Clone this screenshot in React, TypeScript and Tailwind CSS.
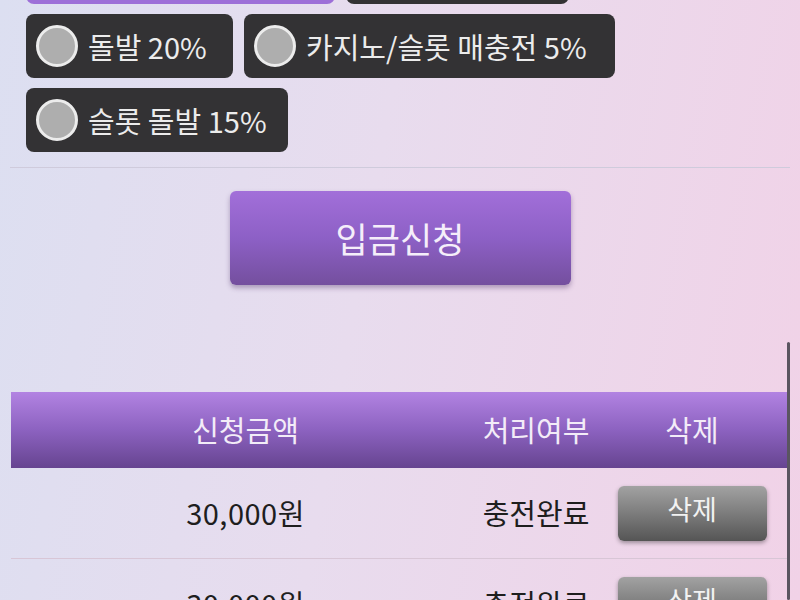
const options = [
  { label: '돌발 20%', width: 'w-[207px]' },
  { label: '카지노/슬롯 매충전 5%', width: 'w-[371px]' },
  { label: '슬롯 돌발 15%', width: 'w-[262px]' },
];

const rows = [
  { amount: '30,000원', status: '충전완료' },
  { amount: '30,000원', status: '충전완료' },
];

const App = () => {
  return (
    <div className="relative w-[800px] h-[600px] overflow-hidden bg-[linear-gradient(100deg,#dcdff1_0%,#e8dcee_45%,#f1d2e7_100%)] font-['Noto_Sans_CJK_KR','Noto_Sans',sans-serif]">
      <div className="flex flex-col -mt-[60px]">
        <div className="flex flex-wrap gap-x-[11px] gap-y-[10px] pl-[26px] pr-[170px]">
          <div className="h-[64px] w-[309px] rounded-[8px] bg-[#9d6fd8]" />
          <div className="h-[64px] w-[223px] rounded-[8px] bg-[#333234]" />
          {options.map((o) => (
            <label
              key={o.label}
              className={`${o.width} h-[64px] rounded-[8px] bg-[#333234] flex items-center gap-[10px] pl-[10px]`}
            >
              <span className="size-[42px] shrink-0 rounded-full bg-[#aeaeae] border-[3px] border-[#ececec]" />
              <span className="text-[29px] leading-none text-[#ececec] whitespace-nowrap">{o.label}</span>
            </label>
          ))}
        </div>

        <div className="mt-[15px] mx-[10px] h-px bg-[#cfcbdc]" />

        <div className="flex justify-center mt-[23px]">
          <button className="w-[341px] h-[94px] rounded-[6px] bg-[linear-gradient(180deg,#a26fd9_0%,#8d60c6_50%,#744f9e_100%)] shadow-[0_3px_5px_rgba(60,30,90,0.35)] text-[35px] text-[#f5eefa]">
            입금신청
          </button>
        </div>

        <div className="mt-[107px] ml-[11px] w-[776px]">
          <div className="grid grid-cols-[469px_112px_195px] h-[76px] items-center bg-[linear-gradient(180deg,#b283e2_0%,#8c62c0_50%,#664490_100%)] text-[29px] text-[#f3ecf8] whitespace-nowrap">
            <span className="text-center">신청금액</span>
            <span className="text-center">처리여부</span>
            <span className="text-center pl-[5px]">삭제</span>
          </div>
          {rows.map((r, i) => (
            <div
              key={i}
              className="grid grid-cols-[469px_112px_195px] h-[91px] items-center border-b border-[#d8c6d6] text-[29px] text-[#1e1e1e] whitespace-nowrap"
            >
              <span className="text-center tracking-[0.5px]">{r.amount}</span>
              <span className="text-center">{r.status}</span>
              <span className="flex justify-center pl-[5px]">
                <button className="w-[149px] h-[55px] rounded-[6px] bg-[linear-gradient(180deg,#a2a2a2_0%,#7c7c7c_50%,#555_100%)] shadow-[0_2px_4px_rgba(0,0,0,0.35)] text-[27px] text-[#f2f2f2] pb-[8px]">
                  삭제
                </button>
              </span>
            </div>
          ))}
        </div>
      </div>

      <div className="absolute right-[10px] top-[342px] bottom-0 w-[3px] rounded-full bg-[#5a5560]" />
    </div>
  );
};

export default App;
